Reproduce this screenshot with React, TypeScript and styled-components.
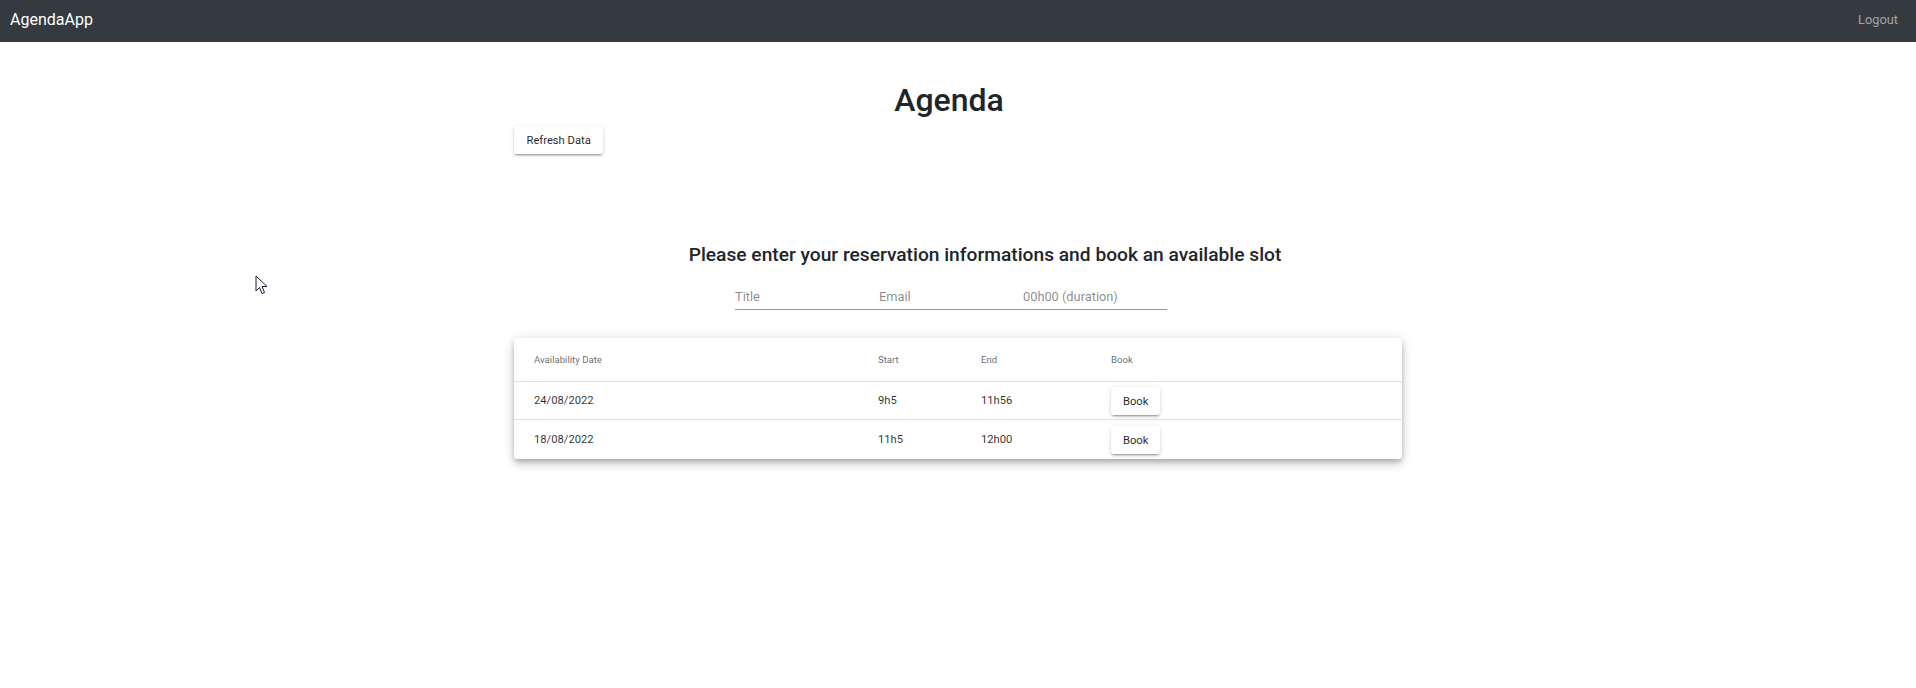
import React from "react";
import styled, { createGlobalStyle } from "styled-components";

const GlobalStyle = createGlobalStyle`
  html, body { margin: 0; padding: 0; background: #fff; }
  body { font-family: Roboto, "Noto Sans", Arial, sans-serif; color: rgba(0,0,0,0.87); }
  * { box-sizing: border-box; }
`;

const Page = styled.div`
  position: relative;
  min-height: 688px;
`;

const NavBar = styled.nav`
  height: 42px;
  background: #343a40;
  display: flex;
  align-items: center;
  justify-content: space-between;
  padding: 0 18px 0 10px;
`;

const Brand = styled.a`
  color: #fff;
  font-size: 16px;
  line-height: 1;
  text-decoration: none;
  margin-top: -2px;
`;

const NavLink = styled.a`
  color: rgba(255, 255, 255, 0.55);
  font-size: 12.8px;
  line-height: 1;
  text-decoration: none;
  margin-top: -2px;
`;

const Main = styled.main`
  width: 888px;
  margin: 0 auto;
  display: flex;
  flex-direction: column;
`;

const Heading = styled.h1`
  margin: 39px 0 0 0;
  padding-right: 18px;
  text-align: center;
  font-size: 32px;
  font-weight: 500;
  line-height: 38px;
  color: #212529;
`;

const Button = styled.button`
  font-family: Roboto, Arial, sans-serif;
  font-size: 11.2px;
  font-weight: 400;
  line-height: 19px;
  color: rgba(0, 0, 0, 0.87);
  background: #fff;
  border: none;
  border-radius: 3px;
  padding: 4.5px 12.5px;
  box-shadow: 0px 3px 1px -2px rgba(0,0,0,0.2), 0px 2px 2px 0px rgba(0,0,0,0.14), 0px 1px 5px 0px rgba(0,0,0,0.12);
  cursor: pointer;
  align-self: flex-start;
`;

const RefreshButton = styled(Button)`
  margin-top: 7px;
`;

const Subtitle = styled.h4`
  margin: 89px 0 0 0;
  padding-left: 54px;
  text-align: center;
  font-size: 19.2px;
  font-weight: 500;
  line-height: 23px;
  color: #212529;
`;

const InputRow = styled.div`
  display: flex;
  justify-content: center;
  padding-right: 14px;
  margin-top: 17.5px;
`;

const Field = styled.input`
  width: 144px;
  font-family: Roboto, Arial, sans-serif;
  font-size: 12.8px;
  line-height: 18px;
  padding: 4px 0 3px 0;
  border: none;
  border-bottom: 1px solid rgba(0, 0, 0, 0.42);
  outline: none;
  background: transparent;
  color: rgba(0, 0, 0, 0.87);
  &::placeholder { color: rgba(0, 0, 0, 0.48); opacity: 1; }
`;

const Paper = styled.div`
  margin-top: 28px;
  background: #fff;
  border-radius: 3px;
  box-shadow: 0px 3px 5px -1px rgba(0,0,0,0.2), 0px 5px 8px 0px rgba(0,0,0,0.14), 0px 1px 14px 0px rgba(0,0,0,0.12);
  overflow: hidden;
`;

const Row = styled.div<{ $head?: boolean }>`
  display: grid;
  grid-template-columns: 344px 103px 130px 1fr;
  align-items: center;
  height: ${(p) => (p.$head ? "44px" : "38.5px")};
  border-bottom: 1px solid rgba(224, 224, 224, 1);
  &:last-child { border-bottom: none; }
`;

const Cell = styled.div<{ $head?: boolean }>`
  padding: 2px 0 0 20px;
  font-size: ${(p) => (p.$head ? "9.6px" : "11.2px")};
  font-weight: 400;
  color: ${(p) => (p.$head ? "rgba(0,0,0,0.62)" : "rgba(0,0,0,0.82)")};
  line-height: 1.4;
`;

const BookButton = styled(Button)`
  padding: 4.5px 12px;
  margin-top: 0;
`;

const Cursor = styled.svg`
  position: absolute;
  left: 255px;
  top: 275px;
`;

const slots = [
  { date: "24/08/2022", start: "9h5", end: "11h56" },
  { date: "18/08/2022", start: "11h5", end: "12h00" },
];

export default function App() {
  return (
    <Page>
      <GlobalStyle />
      <NavBar>
        <Brand href="#">AgendaApp</Brand>
        <NavLink href="#">Logout</NavLink>
      </NavBar>
      <Main>
        <Heading>Agenda</Heading>
        <RefreshButton>Refresh Data</RefreshButton>
        <Subtitle>Please enter your reservation informations and book an available slot</Subtitle>
        <InputRow>
          <Field placeholder="Title" />
          <Field placeholder="Email" />
          <Field placeholder="00h00 (duration)" />
        </InputRow>
        <Paper>
          <Row $head>
            <Cell $head>Availability Date</Cell>
            <Cell $head>Start</Cell>
            <Cell $head>End</Cell>
            <Cell $head>Book</Cell>
          </Row>
          {slots.map((s) => (
            <Row key={s.date}>
              <Cell>{s.date}</Cell>
              <Cell>{s.start}</Cell>
              <Cell>{s.end}</Cell>
              <Cell>
                <BookButton>Book</BookButton>
              </Cell>
            </Row>
          ))}
        </Paper>
      </Main>
      <Cursor width="13" height="21" viewBox="0 0 13 21">
        <path d="M1 1 L1 16 L4.5 12.5 L7 18.5 L9.5 17.5 L7 11.5 L12 11.5 Z" fill="#fff" stroke="#1a1a2e" strokeWidth="1" strokeLinejoin="round" />
      </Cursor>
    </Page>
  );
}
